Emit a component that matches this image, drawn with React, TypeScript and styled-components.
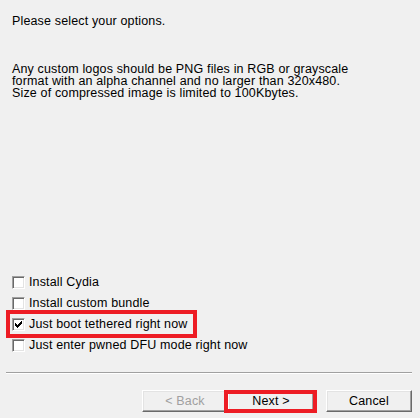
import React from "react";
import styled, { createGlobalStyle } from "styled-components";

const GlobalStyle = createGlobalStyle`
  html, body {
    margin: 0;
    padding: 0;
    background: #f0f0f0;
  }
`;

const Page = styled.div`
  width: 420px;
  height: 418px;
  box-sizing: border-box;
  display: flex;
  flex-direction: column;
  background: #f0f0f0;
  font-family: "Liberation Sans", Arial, sans-serif;
  font-size: 12.5px;
  letter-spacing: 0.15px;
  color: #000;
  overflow: hidden;
`;

const Body = styled.div`
  flex: 1;
  display: flex;
  flex-direction: column;
  padding: 14px 0 0 12px;
`;

const Heading = styled.div`
  line-height: 14px;
`;

const Note = styled.div`
  margin-top: 35px;
  line-height: 12px;
  width: 380px;
`;

const Options = styled.div`
  margin-top: auto;
  display: flex;
  flex-direction: column;
  gap: 5px;
  margin-bottom: 19px;
`;

const Option = styled.label<{ $marked?: boolean }>`
  display: inline-flex;
  align-self: flex-start;
  align-items: center;
  gap: 4px;
  height: 16px;
  padding-right: 4px;
  outline: ${(p) => (p.$marked ? "4px solid #ed1c24" : "none")};
  outline-offset: 2px;
`;

const Box = styled.span`
  width: 13px;
  height: 13px;
  box-sizing: border-box;
  background: #fff;
  border-style: solid;
  border-width: 1px;
  border-color: #a0a0a0 #fff #fff #a0a0a0;
  box-shadow: inset 1px 1px 0 #696969, inset -1px -1px 0 #e3e3e3;
  display: flex;
  align-items: center;
  justify-content: center;
`;

const Divider = styled.div`
  margin: 0 8px 0 6px;
  height: 1px;
  background: #a0a0a0;
  border-bottom: 1px solid #fff;
`;

const Buttons = styled.div`
  display: flex;
  justify-content: flex-end;
  padding: 16px 8px 6px 0;
`;

const Button = styled.button<{ $gap?: boolean; $marked?: boolean }>`
  position: relative;
  width: 86px;
  height: 22px;
  margin-left: ${(p) => (p.$gap ? "12px" : "0")};
  padding: 0;
  background: #f0f0f0;
  font-family: inherit;
  font-size: 12.5px;
  letter-spacing: 0.15px;
  color: #000;
  border-style: solid;
  border-width: 1px;
  border-color: #fff #696969 #696969 #fff;
  box-shadow: inset -1px -1px 0 #a0a0a0, inset 1px 1px 0 #e3e3e3;
  &:disabled {
    color: #a0a0a0;
  }
  &::after {
    content: "";
    display: ${(p) => (p.$marked ? "block" : "none")};
    position: absolute;
    left: -5px;
    right: -4px;
    top: -1px;
    bottom: -2px;
    border: 4px solid #ed1c24;
  }
`;

function Check() {
  return (
    <svg width="7" height="7" viewBox="0 0 7 7">
      <path d="M0 2h1v1h1v1h1V3h1V2h1V1h1V0h1v3H6v1H5v1H4v1H3v1H2V6H1V5H0z" fill="#000" />
    </svg>
  );
}

const options = [
  { text: "Install Cydia", checked: false },
  { text: "Install custom bundle", checked: false },
  { text: "Just boot tethered right now", checked: true, marked: true },
  { text: "Just enter pwned DFU mode right now", checked: false },
];

export default function App() {
  return (
    <Page>
      <GlobalStyle />
      <Body>
        <Heading>Please select your options.</Heading>
        <Note>
          Any custom logos should be PNG files in RGB or grayscale
          <br />
          format with an alpha channel and no larger than 320x480.
          <br />
          Size of compressed image is limited to 100Kbytes.
        </Note>
        <Options>
          {options.map((o) => (
            <Option key={o.text} $marked={o.marked}>
              <Box>{o.checked && <Check />}</Box>
              {o.text}
            </Option>
          ))}
        </Options>
      </Body>
      <Divider />
      <Buttons>
        <Button disabled>&lt; Back</Button>
        <Button $marked>Next &gt;</Button>
        <Button $gap>Cancel</Button>
      </Buttons>
    </Page>
  );
}
